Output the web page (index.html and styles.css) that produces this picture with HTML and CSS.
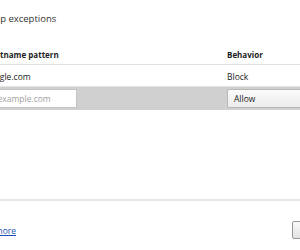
FILE: index.html
```html
<!DOCTYPE html>
<html lang="en">
<head>
    <meta charset="UTF-8">
    <meta name="viewport" content="width=device-width, initial-scale=1.0">
    <title>Pop-up exceptions</title>
    <link rel="stylesheet" href="styles.css">
</head>
<body>
    <div class="dialog">
        <h1 class="title">Pop-up exceptions</h1>

        <!-- exception list -->
        <div class="list">
            <div class="row list-head">
                <div class="col-pattern">Hostname pattern</div>
                <div class="col-behavior">Behavior</div>
            </div>
            <div class="row list-item">
                <div class="col-pattern">google.com</div>
                <div class="col-behavior">Block</div>
            </div>
            <div class="row list-new">
                <div class="col-pattern">
                    <input type="text" class="pattern-input" placeholder="[*.]example.com">
                </div>
                <div class="col-behavior">
                    <div class="behavior-select">Allow</div>
                </div>
            </div>
        </div>

        <div class="footer">
            <a href="#" class="learn-more">Learn more</a>
            <button class="ok-btn">OK</button>
        </div>
    </div>
</body>
</html>
```

FILE: styles.css
```css
body {
    margin: 0;
    padding: 0;
    width: 300px;
    height: 250px;
    overflow: hidden;
    background: #ffffff;
    font-family: "Open Sans", "Liberation Sans", sans-serif;
    color: #222222;
}

.dialog {
    display: flex;
    flex-direction: column;
    width: 378px;
    height: 250px;
    margin-left: -26px;
}

.title {
    margin: 13px 0 0 0;
    font-size: 9.5px;
    font-weight: normal;
    line-height: 12px;
    color: #333333;
}

.list {
    flex: 1;
    margin: 21px -40px 0 11px;
    border-bottom: 2px solid #e6e6e6;
}

.row {
    display: flex;
    font-size: 8.5px;
}

.col-pattern {
    width: 242px;
    flex-shrink: 0;
}

.col-behavior {
    flex: 1;
}

.list-head {
    height: 18px;
    line-height: 18px;
    font-size: 8px;
    font-weight: bold;
    border-bottom: 1px solid #e3e3e3;
}

.list-item {
    height: 18px;
    line-height: 18px;
    padding-top: 3px;
    border-bottom: 1px solid #e3e3e3;
}

.list-new {
    height: 23px;
    align-items: center;
    background: #d0d0d0;
}

.pattern-input {
    display: block;
    box-sizing: border-box;
    width: 97px;
    height: 19px;
    margin-left: -5px;
    padding: 0 4px;
    border: 1px solid #c4c4c4;
    background: #ffffff;
    font-family: inherit;
    font-size: 8.5px;
    outline: none;
}

.pattern-input::placeholder {
    color: #a0a0a0;
}

.behavior-select {
    box-sizing: border-box;
    height: 19px;
    line-height: 17px;
    padding-left: 6px;
    border: 1px solid #b8b8b8;
    border-radius: 2px;
    background: linear-gradient(to bottom, #fbfbfb, #ececec);
}

.footer {
    display: flex;
    justify-content: space-between;
    align-items: center;
    height: 49px;
}

.learn-more {
    margin-left: -4px;
    margin-top: 10px;
    font-size: 8.5px;
    color: #1a4fb5;
}

.ok-btn {
    box-sizing: border-box;
    width: 60px;
    height: 18px;
    margin-top: 8px;
    border: 1px solid #9a9a9a;
    border-radius: 2px;
    background: linear-gradient(to bottom, #fafafa, #e2e2e2);
    font-family: inherit;
    font-size: 8px;
}
```
